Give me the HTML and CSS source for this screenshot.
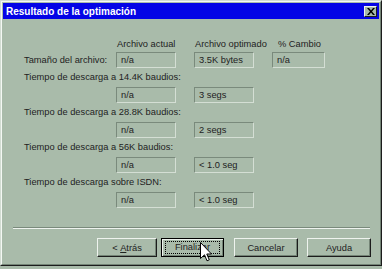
FILE: index.html
```html
<!DOCTYPE html>
<html lang="es">
<head>
  <meta charset="UTF-8">
  <title>Resultado de la optimación</title>
  <link rel="stylesheet" href="styles.css">
</head>
<body>
  <div class="dialog">
    <div class="frame">
      <div class="titlebar">
        <span class="title">Resultado de la optimación</span>
        <span class="close">
          <svg width="8" height="7" viewBox="0 0 8 7">
            <path d="M0 0h2l2 2.5L6 0h2L5 3.5 8 7H6L4 4.5 2 7H0l3-3.5z" fill="#000"/>
          </svg>
        </span>
      </div>

      <div class="content">
        <div class="grid">
          <div></div>
          <div class="head">Archivo actual</div>
          <div class="head">Archivo optimado</div>
          <div class="head change">% Cambio</div>

          <div class="label">Tamaño del archivo:</div>
          <div class="box">n/a</div>
          <div class="box">3.5K bytes</div>
          <div class="box">n/a</div>

          <div class="label wide">Tiempo de descarga a 14.4K baudios:</div>
          <div class="box first">n/a</div>
          <div class="box">3 segs</div>

          <div class="label wide">Tiempo de descarga a 28.8K baudios:</div>
          <div class="box first">n/a</div>
          <div class="box">2 segs</div>

          <div class="label wide">Tiempo de descarga a 56K baudios:</div>
          <div class="box first">n/a</div>
          <div class="box">&lt; 1.0 seg</div>

          <div class="label wide">Tiempo de descarga sobre ISDN:</div>
          <div class="box first">n/a</div>
          <div class="box">&lt; 1.0 seg</div>
        </div>

        <div class="separator"></div>

        <div class="buttons">
          <button class="btn back">&lt;&nbsp;<u>A</u>trás</button>
          <button class="btn default"><span class="focus">Finalizar</span></button>
          <button class="btn cancel">Cancelar</button>
          <button class="btn help">Ayuda</button>
        </div>
      </div>
    </div>

    <svg class="cursor" width="12" height="20" viewBox="0 0 12 20">
      <path d="M0.5 0.5V16.5L4.5 12.8L7 18.8L9.3 17.8L6.8 12H11.5Z" fill="#fff" stroke="#000" stroke-width="1"/>
    </svg>
  </div>
</body>
</html>
```

FILE: styles.css
```css
body {
  margin: 0;
  background: #a9bbaa;
  font-family: "Liberation Sans", Arial, sans-serif;
  font-size: 9.3px;
  color: #1e221e;
}

.dialog {
  position: relative;
  width: 382px;
  height: 266px;
  box-sizing: border-box;
  border-top: 1px solid #d2dcd2;
  border-left: 1px solid #d2dcd2;
  border-right: 1px solid #1c1c1c;
  border-bottom: 1px solid #1c1c1c;
}

.frame {
  height: 100%;
  box-sizing: border-box;
  border-top: 1px solid #f4f8f4;
  border-left: 1px solid #f4f8f4;
  border-right: 1px solid #748476;
  border-bottom: 1px solid #748476;
  padding: 1px;
}

.titlebar {
  height: 16px;
  background: #0404e6;
  display: flex;
  align-items: center;
  justify-content: space-between;
  padding: 0 2px 0 3px;
}

.title {
  color: #fff;
  font-weight: bold;
  font-size: 10px;
}

.close {
  width: 13px;
  height: 11px;
  box-sizing: border-box;
  background: #a9bbaa;
  border-top: 1px solid #eef3ee;
  border-left: 1px solid #eef3ee;
  border-right: 1px solid #1c1c1c;
  border-bottom: 1px solid #1c1c1c;
  display: flex;
  align-items: center;
  justify-content: center;
}

.content {
  padding-top: 19px;
}

.grid {
  display: grid;
  grid-template-columns: 74px 60px 60px 53px;
  column-gap: 18px;
  padding-left: 21px;
  white-space: nowrap;
}

.head {
  line-height: 13px;
  margin-bottom: 1px;
  padding-left: 1px;
}

.head.change {
  padding-left: 6px;
}

.label {
  line-height: 13px;
  align-self: center;
}

.label.wide {
  grid-column: 1 / 5;
  margin-top: 3px;
  margin-bottom: 3px;
}

.box {
  height: 16px;
  line-height: 14px;
  box-sizing: border-box;
  padding-left: 4px;
  border-top: 1px solid #7a8a7c;
  border-left: 1px solid #7a8a7c;
  border-right: 1px solid #d4ded4;
  border-bottom: 1px solid #d4ded4;
}

.box.first {
  grid-column: 2;
}

.separator {
  margin: 19px 9px 0 10px;
  border-top: 1px solid #7a8a7c;
  border-bottom: 1px solid #eef3ee;
}

.buttons {
  display: flex;
  justify-content: flex-end;
  padding-right: 8px;
  margin-top: 9px;
}

.btn {
  height: 19px;
  padding: 0;
  font-family: "Liberation Sans", Arial, sans-serif;
  font-size: 9.3px;
  color: #1e221e;
  background: #a9bbaa;
  border-top: 1px solid #eef3ee;
  border-left: 1px solid #eef3ee;
  border-right: 1px solid #1c1c1c;
  border-bottom: 1px solid #1c1c1c;
  box-shadow: inset -1px -1px 0 #748476;
}

.back {
  width: 60px;
}

.default {
  width: 63px;
  margin-left: 4px;
  border: 1px solid #000;
  box-shadow: inset 1px 1px 0 #eef3ee, inset -1px -1px 0 #748476;
}

.focus {
  display: block;
  margin: 0 3px;
  line-height: 11px;
  border: 1px dotted #000;
}

.cancel {
  width: 64px;
  margin-left: 10px;
}

.help {
  width: 64px;
  margin-left: 9px;
}

.cursor {
  position: absolute;
  left: 199px;
  top: 241px;
}
```
